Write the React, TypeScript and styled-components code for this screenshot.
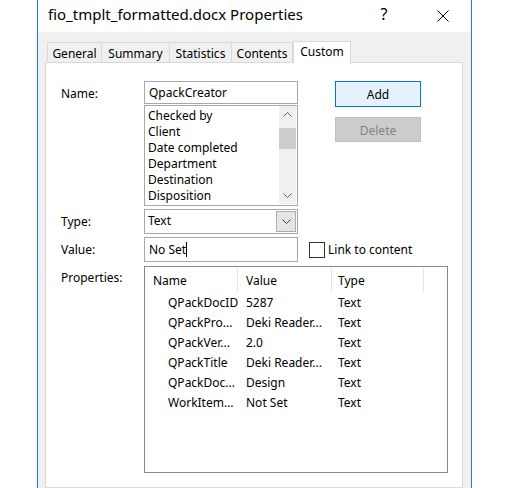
import styled, { createGlobalStyle } from 'styled-components';

const GlobalStyle = createGlobalStyle`
  html, body {
    margin: 0;
    padding: 0;
    background: #ffffff;
    overflow: hidden;
  }
  body {
    font-family: 'Segoe UI', 'Noto Sans', Arial, sans-serif;
    font-size: 12px;
    color: #000000;
  }
`;

const tabs = [
  { label: 'General', width: 55 },
  { label: 'Summary', width: 68 },
  { label: 'Statistics', width: 62 },
  { label: 'Contents', width: 61 },
  { label: 'Custom', width: 58 },
];

const names = [
  'Checked by',
  'Client',
  'Date completed',
  'Department',
  'Destination',
  'Disposition',
];

const properties = [
  { name: 'QPackDocID', value: '5287', type: 'Text' },
  { name: 'QPackPro...', value: 'Deki Reader...', type: 'Text' },
  { name: 'QPackVer...', value: '2.0', type: 'Text' },
  { name: 'QPackTitle', value: 'Deki Reader...', type: 'Text' },
  { name: 'QPackDoc...', value: 'Design', type: 'Text' },
  { name: 'WorkItem...', value: 'Not Set', type: 'Text' },
];

const ChevronUp = () => (
  <svg width="9" height="5" viewBox="0 0 9 5">
    <polyline points="0.5,4.5 4.5,0.5 8.5,4.5" fill="none" stroke="#606060" strokeWidth="1" />
  </svg>
);

const ChevronDown = ({ color = '#606060' }: { color?: string }) => (
  <svg width="9" height="5" viewBox="0 0 9 5">
    <polyline points="0.5,0.5 4.5,4.5 8.5,0.5" fill="none" stroke={color} strokeWidth="1" />
  </svg>
);

const App = () => {
  return (
    <>
      <GlobalStyle />
      <Page>
        <Window>
          <TitleBar>
            <Title>fio_tmplt_formatted.docx Properties</Title>
            <HelpButton>?</HelpButton>
            <CloseButton>
              <svg width="12" height="12" viewBox="0 0 12 12">
                <path d="M0.5 0.5 L11.5 11.5 M11.5 0.5 L0.5 11.5" stroke="#000" strokeWidth="1" />
              </svg>
            </CloseButton>
          </TitleBar>
          <Body>
            <TabStrip>
              {tabs.map((t) => (
                <Tab key={t.label} $active={t.label === 'Custom'} $width={t.width}>
                  {t.label}
                </Tab>
              ))}
            </TabStrip>
            <Panel>
              <NameRow>
                <Label>Name:</Label>
                <FieldColumn>
                  <TextBox>QpackCreator</TextBox>
                  <ListBox>
                    <ListItems>
                      {names.map((n) => (
                        <ListItem key={n}>{n}</ListItem>
                      ))}
                    </ListItems>
                    <ScrollBar>
                      <ScrollArrow>
                        <ChevronUp />
                      </ScrollArrow>
                      <ScrollTrack>
                        <ScrollThumb />
                      </ScrollTrack>
                      <ScrollArrow>
                        <ChevronDown />
                      </ScrollArrow>
                    </ScrollBar>
                  </ListBox>
                </FieldColumn>
                <ButtonColumn>
                  <Button $primary>Add</Button>
                  <Button $disabled>Delete</Button>
                </ButtonColumn>
              </NameRow>
              <Row>
                <Label>Type:</Label>
                <Select>
                  <SelectText>Text</SelectText>
                  <DropButton>
                    <ChevronDown color="#404040" />
                  </DropButton>
                </Select>
              </Row>
              <Row>
                <Label>Value:</Label>
                <ValueBox>
                  No Set
                  <Caret />
                </ValueBox>
                <CheckLabel>
                  <CheckBox />
                  Link to content
                </CheckLabel>
              </Row>
              <Row>
                <Label>Properties:</Label>
                <ListView>
                  <HeaderRow>
                    <HeaderCell $width={93}>Name</HeaderCell>
                    <HeaderCell $width={94}>Value</HeaderCell>
                    <HeaderCell $width={92} $pad={6}>Type</HeaderCell>
                    <HeaderFiller />
                  </HeaderRow>
                  {properties.map((p) => (
                    <DataRow key={p.name}>
                      <NameCell>{p.name}</NameCell>
                      <Cell $width={92}>{p.value}</Cell>
                      <Cell $width={92}>{p.type}</Cell>
                    </DataRow>
                  ))}
                </ListView>
              </Row>
            </Panel>
          </Body>
        </Window>
      </Page>
    </>
  );
};

const Page = styled.div`
  width: 516px;
  height: 488px;
  background: #ffffff;
`;

const Window = styled.div`
  margin-left: 37px;
  width: 433px;
  height: 488px;
  border-left: 1px solid #1883d7;
  border-right: 1px solid #1883d7;
  background: #f0f0f0;
  display: flex;
  flex-direction: column;
`;

const TitleBar = styled.div`
  height: 32px;
  background: #ffffff;
  display: flex;
  align-items: center;
  padding-left: 10px;
  padding-bottom: 4px;
  box-sizing: border-box;
`;

const Title = styled.div`
  flex: 1;
  font-size: 15px;
  color: #000000;
  white-space: nowrap;
`;

const HelpButton = styled.div`
  width: 30px;
  text-align: center;
  font-size: 16px;
  margin-right: 21px;
`;

const CloseButton = styled.div`
  width: 46px;
  display: flex;
  justify-content: center;
  align-items: center;
  padding-top: 3px;
  margin-right: 5px;
`;

const Body = styled.div`
  flex: 1;
  padding: 10px 8px 0 7px;
  display: flex;
  flex-direction: column;
`;

const TabStrip = styled.div`
  display: flex;
  align-items: flex-end;
  padding-left: 2px;
  height: 21px;
  position: relative;
  z-index: 1;
`;

const Tab = styled.div<{ $active?: boolean; $width: number }>`
  box-sizing: border-box;
  width: ${({ $width }) => $width}px;
  height: ${({ $active }) => ($active ? '23px' : '21px')};
  margin-top: ${({ $active }) => ($active ? '-2px' : '0')};
  padding-bottom: ${({ $active }) => ($active ? '2px' : '0')};
  padding-top: ${({ $active }) => ($active ? '0' : '1px')};
  display: flex;
  align-items: center;
  justify-content: center;
  border: 1px solid #d9d9d9;
  border-bottom: ${({ $active }) => ($active ? '1px solid #ffffff' : '1px solid #d9d9d9')};
  border-left: ${({ $active }) => ($active ? '1px solid #d9d9d9' : 'none')};
  background: ${({ $active }) => ($active ? '#ffffff' : '#f0f0f0')};
  margin-bottom: ${({ $active }) => ($active ? '-1px' : '0')};
  white-space: nowrap;
  &:first-child {
    border-left: 1px solid #d9d9d9;
  }
`;

const Panel = styled.div`
  flex: 1;
  background: #ffffff;
  border: 1px solid #d9d9d9;
  margin-top: -1px;
  padding: 18px 0 0 15px;
  display: flex;
  flex-direction: column;
  gap: 3px;
`;

const Row = styled.div`
  display: flex;
  align-items: flex-start;
`;

const NameRow = styled(Row)`
  margin-bottom: 0;
`;

const Label = styled.div`
  width: 83px;
  height: 23px;
  line-height: 23px;
  padding-top: 1px;
  box-sizing: border-box;
  flex-shrink: 0;
`;

const FieldColumn = styled.div`
  width: 154px;
  display: flex;
  flex-direction: column;
  gap: 1px;
`;

const TextBox = styled.div`
  box-sizing: border-box;
  height: 23px;
  border: 1px solid #a8a8a8;
  padding: 1px 0 0 4px;
  line-height: 20px;
`;

const ListBox = styled.div`
  box-sizing: border-box;
  height: 101px;
  border: 1px solid #a8a8a8;
  display: flex;
  overflow: hidden;
`;

const ListItems = styled.div`
  flex: 1;
  padding: 2px 0 0 3px;
`;

const ListItem = styled.div`
  height: 16px;
  line-height: 16px;
  white-space: nowrap;
`;

const ScrollBar = styled.div`
  width: 17px;
  margin: 0 1px 1px 0;
  background: #f0f0f0;
  display: flex;
  flex-direction: column;
`;

const ScrollArrow = styled.div`
  height: 17px;
  display: flex;
  align-items: center;
  justify-content: center;
`;

const ScrollTrack = styled.div`
  flex: 1;
`;

const ScrollThumb = styled.div`
  margin-top: 5px;
  height: 21px;
  background: #cdcdcd;
`;

const ButtonColumn = styled.div`
  margin-left: 37px;
  display: flex;
  flex-direction: column;
  gap: 10px;
`;

const Button = styled.div<{ $primary?: boolean; $disabled?: boolean }>`
  box-sizing: border-box;
  width: 86px;
  height: ${({ $primary }) => ($primary ? '26px' : '25px')};
  display: flex;
  align-items: center;
  justify-content: center;
  padding-top: 1px;
  border: 1px solid
    ${({ $primary, $disabled }) => ($primary ? '#0078d7' : $disabled ? '#bfbfbf' : '#adadad')};
  background: ${({ $primary, $disabled }) => ($primary ? '#e5f1fb' : $disabled ? '#cccccc' : '#e1e1e1')};
  color: ${({ $disabled }) => ($disabled ? '#838383' : '#000000')};
`;

const Select = styled.div`
  box-sizing: border-box;
  width: 154px;
  height: 25px;
  border: 1px solid #a8a8a8;
  display: flex;
  align-items: stretch;
  padding: 1px;
`;

const SelectText = styled.div`
  flex: 1;
  padding-left: 2px;
  line-height: 20px;
`;

const DropButton = styled.div`
  box-sizing: border-box;
  width: 20px;
  background: #e5e5e5;
  border: 1px solid #adadad;
  display: flex;
  align-items: center;
  justify-content: center;
`;

const ValueBox = styled.div`
  box-sizing: border-box;
  width: 154px;
  height: 25px;
  border: 1px solid #a8a8a8;
  padding-left: 4px;
  line-height: 23px;
  display: flex;
  align-items: center;
`;

const Caret = styled.span`
  display: inline-block;
  width: 1px;
  height: 15px;
  background: #000000;
`;

const CheckLabel = styled.div`
  margin-left: 11px;
  height: 25px;
  display: flex;
  align-items: center;
  gap: 3px;
  white-space: nowrap;
`;

const CheckBox = styled.div`
  box-sizing: border-box;
  width: 16px;
  height: 16px;
  border: 1px solid #333333;
  background: #ffffff;
`;

const ListView = styled.div`
  box-sizing: border-box;
  width: 304px;
  height: 207px;
  border: 1px solid #828790;
  margin-top: 1px;
`;

const HeaderRow = styled.div`
  display: flex;
  height: 25px;
  padding-top: 1px;
  box-sizing: border-box;
`;

const HeaderCell = styled.div<{ $width: number; $pad?: number }>`
  box-sizing: border-box;
  width: ${({ $width }) => $width}px;
  padding-left: ${({ $pad }) => $pad ?? 8}px;
  border-right: 1px solid #e5e5e5;
  display: flex;
  align-items: center;
`;

const HeaderFiller = styled.div`
  flex: 1;
`;

const DataRow = styled.div`
  display: flex;
  height: 20px;
  align-items: center;
`;

const Cell = styled.div<{ $width: number }>`
  width: ${({ $width }) => $width}px;
  padding-left: 8px;
  box-sizing: border-box;
  white-space: nowrap;
`;

const NameCell = styled.div`
  width: 93px;
  padding-left: 23px;
  box-sizing: border-box;
  white-space: nowrap;
`;

export default App;
